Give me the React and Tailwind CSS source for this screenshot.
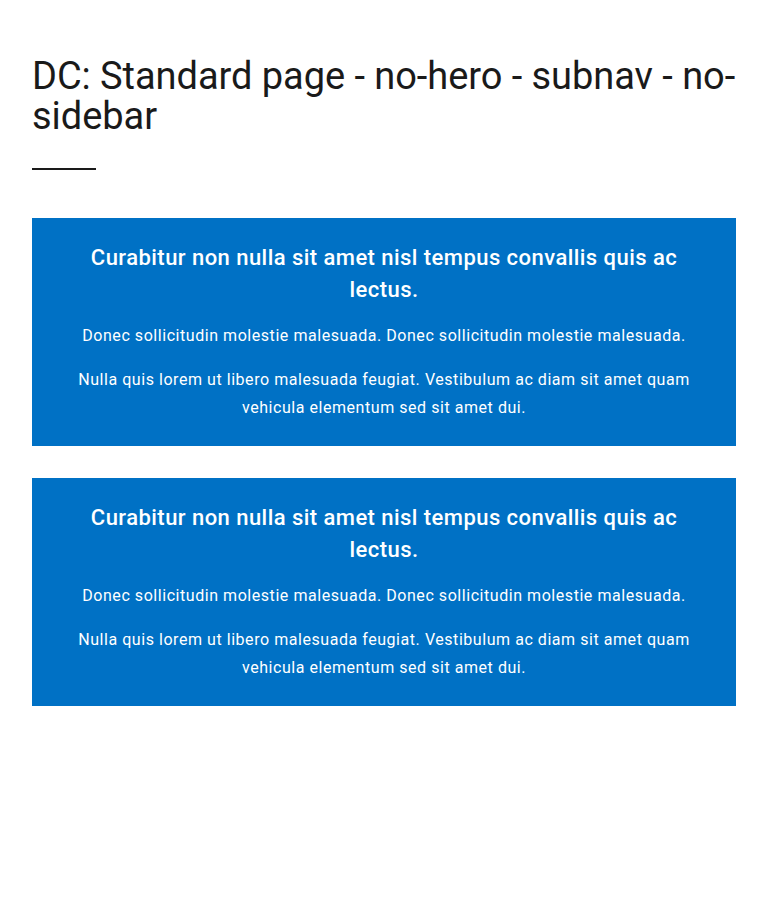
import React from 'react'

const cards = [1, 2]

function CalloutCard() {
  return (
    <section className="bg-[#0071c5] px-10 py-6 text-center text-white">
      <h2 className="text-[22px] leading-8 font-medium tracking-[0.45px]">
        Curabitur non nulla sit amet nisl tempus convallis quis ac lectus.
      </h2>
      <p className="mt-4 text-base leading-7 tracking-[0.55px]">
        Donec sollicitudin molestie malesuada. Donec sollicitudin molestie malesuada.
      </p>
      <p className="mt-4 text-base leading-7 tracking-[0.55px]">
        Nulla quis lorem ut libero malesuada feugiat. Vestibulum ac diam sit amet quam vehicula elementum sed sit amet dui.
      </p>
    </section>
  )
}

export default function App() {
  return (
    <div className="min-h-[920px] bg-white px-8 pt-[56px] font-['Roboto',sans-serif] text-[#1a1a1a]">
      <h1 className="text-[38px] leading-10 font-normal tracking-[-0.05px]">
        DC: Standard page - no-hero - subnav - no-sidebar
      </h1>
      <div className="mt-8 h-[2px] w-16 bg-[#1a1a1a]" />
      <div className="mt-12 flex flex-col gap-8">
        {cards.map((c) => (
          <CalloutCard key={c} />
        ))}
      </div>
    </div>
  )
}
